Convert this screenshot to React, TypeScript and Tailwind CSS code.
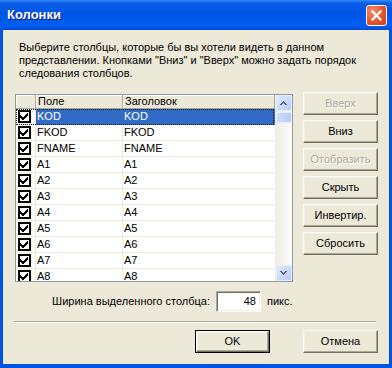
import clsx from "clsx";

const rows = ["KOD", "FKOD", "FNAME", "A1", "A2", "A3", "A4", "A5", "A6", "A7", "A8"];

const Check = () => (
  <div className="w-[13px] h-[13px] bg-white border-2 border-black flex items-center justify-center">
    <svg width="9" height="9" viewBox="0 0 9 9" shapeRendering="crispEdges">
      <path d="M7 1h1v1h-1zM6 2h2v1h-2zM0 3h1v1h-1zM5 3h3v1h-3zM0 4h2v1h-2zM4 4h3v1h-3zM0 5h6v1h-6zM1 6h4v1h-4zM2 7h2v1h-2z" fill="#000" />
    </svg>
  </div>
);

const Btn = ({ label, disabled, def }: { label: string; disabled?: boolean; def?: boolean }) => {
  const inner = (
    <div
      className={clsx(
        "h-full w-full flex items-center justify-center border border-t-white border-l-white border-r-[#716f64] border-b-[#716f64] bg-[#ece9d8] shadow-[inset_-1px_-1px_0_#aca899,inset_1px_1px_0_#f1efe2]",
        disabled ? "text-[#aca899] [text-shadow:1px_1px_0_#fff]" : "text-black"
      )}
    >
      {label}
    </div>
  );
  if (def) return <div className="w-[75px] h-[23px] border border-black">{inner}</div>;
  return <div className="w-[75px] h-[23px]">{inner}</div>;
};

const ScrollBtn = ({ up }: { up?: boolean }) => (
  <div className="w-[16px] h-[16px] rounded-[2px] border border-[#e6eefc] bg-[linear-gradient(135deg,#e1eafe,#b9ccf7)] flex items-center justify-center">
    <svg width="7" height="4" viewBox="0 0 7 4" shapeRendering="crispEdges">
      {up ? (
        <path d="M3 0h1v1h-1zM2 1h3v1h-3zM1 2h2v1h-2zM4 2h2v1h-2zM0 3h2v1h-2zM5 3h2v1h-2z" fill="#4d6185" />
      ) : (
        <path d="M0 0h2v1h-2zM5 0h2v1h-2zM1 1h2v1h-2zM4 1h2v1h-2zM2 2h3v1h-3zM3 3h1v1h-1z" fill="#4d6185" />
      )}
    </svg>
  </div>
);

export default function App() {
  return (
    <div className="w-[392px] h-[368px] flex flex-col bg-[#0054e3] font-['Liberation_Sans',sans-serif] text-[11px] text-black select-none">
      {/* title bar */}
      <div className="h-[30px] shrink-0 flex items-center justify-between pl-[7px] pr-[5px] bg-[linear-gradient(to_bottom,#3a8cf8_0%,#0a5ee8_10%,#0055e5_45%,#005ef0_85%,#0048dc_100%)]">
        <span className="text-white font-bold text-[13px] [text-shadow:1px_1px_0_#0a1883]">Колонки</span>
        <div className="w-[21px] h-[21px] rounded-[3px] border border-white bg-[radial-gradient(circle_at_30%_30%,#f28d6a,#e0502a_60%,#c8401c)] flex items-center justify-center">
          <svg width="11" height="11" viewBox="0 0 11 11">
            <path d="M1.5 1.5 L9.5 9.5 M9.5 1.5 L1.5 9.5" stroke="#fff" strokeWidth="2.2" strokeLinecap="square" />
          </svg>
        </div>
      </div>

      {/* client area */}
      <div className="flex-1 mx-[3px] mb-[4px] bg-[#ece9d8] flex flex-col">
        <p className="pl-[16px] pt-[11px] leading-[13px] w-[362px]">
          Выберите столбцы, которые бы вы хотели видеть в данном представлении. Кнопками "Вниз" и "Вверх" можно задать порядок следования столбцов.
        </p>

        <div className="flex items-start mt-[12px]">
          {/* list */}
          <div className="ml-[12px] mt-[2px] w-[278px] h-[188px] border border-[#8f9aa8] bg-white flex overflow-hidden">
            <div className="flex-1 flex flex-col">
              <div className="h-[14px] flex shrink-0">
                <div className="w-[20px] h-full border-r border-b border-[#aca899] shadow-[inset_1px_1px_0_#fff] bg-[#ece9d8]" />
                <div className="w-[87px] h-full border-r border-b border-[#aca899] shadow-[inset_1px_1px_0_#fff] bg-[#ece9d8] pl-[2px] leading-[13px]">Поле</div>
                <div className="flex-1 h-full border-r border-b border-[#aca899] shadow-[inset_1px_1px_0_#fff] bg-[#ece9d8] pl-[2px] leading-[13px]">Заголовок</div>
              </div>
              {rows.map((r, i) => {
                const sel = i === 0;
                return (
                  <div key={r} className="relative h-[16px] shrink-0 flex">
                    <div className="w-[20px] h-full border-r border-b border-[#ece9d8] flex items-center pl-[2px]">
                      <Check />
                    </div>
                    <div
                      className={clsx(
                        "w-[87px] h-full border-b border-r pl-[1px] leading-[15px]",
                        sel ? "bg-[#316ac5] text-white border-[#316ac5]" : "border-[#ece9d8]"
                      )}
                    >
                      {r}
                    </div>
                    <div
                      className={clsx(
                        "flex-1 h-full border-b pl-[1px] leading-[15px]",
                        sel ? "bg-[#316ac5] text-white border-[#316ac5]" : "border-[#ece9d8]"
                      )}
                    >
                      {r}
                    </div>
                    {sel && <span className="absolute inset-0 right-[1px] border border-dotted border-[#1a1a1a]" />}
                  </div>
                );
              })}
            </div>
            {/* scrollbar */}
            <div className="w-[17px] h-full flex flex-col items-center bg-[linear-gradient(to_right,#eeede5,#fbfbf8)]">
              <ScrollBtn up />
              <div className="mt-[1px] w-[16px] h-[11px] rounded-[2px] border border-[#e6eefc] bg-[linear-gradient(to_right,#d0dcfc,#b8cbf8)]" />
              <div className="flex-1" />
              <ScrollBtn />
            </div>
          </div>

          {/* side buttons */}
          <div className="ml-[10px] flex flex-col gap-[5px]">
            <Btn label="Вверх" disabled />
            <Btn label="Вниз" />
            <Btn label="Отобразить" disabled />
            <Btn label="Скрыть" />
            <Btn label="Инвертир." />
            <Btn label="Сбросить" />
          </div>
        </div>

        <div className="flex items-center mt-[9px] h-[21px]">
          <span className="w-[207px] text-right">Ширина выделенного столбца:</span>
          <div className="ml-[6px] w-[45px] h-[21px] bg-white border border-t-[#aca899] border-l-[#aca899] border-r-white border-b-white shadow-[inset_1px_1px_0_#716f64,inset_-1px_-1px_0_#f1efe2] text-right pr-[4px] leading-[19px]">
            48
          </div>
          <span className="ml-[6px]">пикс.</span>
        </div>

        <div className="mt-[9px] ml-[11px] w-[362px] border-t border-b border-t-[#aca899] border-b-white" />

        <div className="mt-[7px] flex">
          <div className="ml-[192px]">
            <Btn label="OK" def />
          </div>
          <div className="ml-[33px]">
            <Btn label="Отмена" />
          </div>
        </div>
      </div>
    </div>
  );
}
